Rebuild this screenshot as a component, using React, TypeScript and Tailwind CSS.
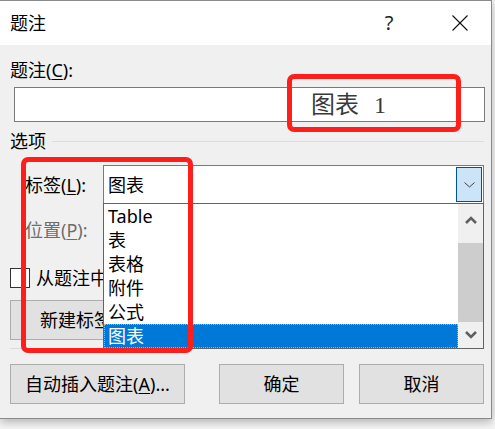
import React from "react";

const items = ["Table", "表", "表格", "附件", "公式", "图表"];

function ChevUp() {
  return (
    <svg width="12" height="8" viewBox="0 0 12 8">
      <polyline points="1,7 6,2 11,7" fill="none" stroke="#606060" strokeWidth="2.6" />
    </svg>
  );
}
function ChevDown() {
  return (
    <svg width="12" height="8" viewBox="0 0 12 8">
      <polyline points="1,1 6,6 11,1" fill="none" stroke="#606060" strokeWidth="2.6" />
    </svg>
  );
}

export default function App() {
  return (
    <div className="w-[495px] h-[429px] bg-[#f5f5f5] overflow-hidden font-['Noto_Sans','Noto_Sans_CJK_SC',sans-serif] text-[18px] text-black">
      <div className="w-[492px] h-[419px] flex flex-col border-t border-r border-b border-[#8a8a8a] shadow-[0_3px_9px_rgba(0,0,0,0.28)]">
        {/* title bar */}
        <div className="h-[44px] bg-white flex items-center pl-[10px]">
          <span className="leading-[24px] text-[18px]">题注</span>
          <span className="ml-auto w-[10px] text-center text-[20px] leading-[24px] text-[#222]">?</span>
          <svg className="ml-[58px] mr-[23px]" width="16" height="16" viewBox="0 0 16 16">
            <line x1="0.5" y1="0.5" x2="15.5" y2="15.5" stroke="#111" strokeWidth="1.1" />
            <line x1="15.5" y1="0.5" x2="0.5" y2="15.5" stroke="#111" strokeWidth="1.1" />
          </svg>
        </div>

        {/* body */}
        <div className="relative flex-1 bg-[#f0f0f0] flex flex-col">
          <div className="ml-[10px] mt-[13px] h-[24px] leading-[24px]">
            题注(<u className="underline-offset-2">C</u>):
          </div>
          <div className="ml-[14px] mt-[5px] w-[471px] h-[35px] border border-[#7a7a7a] bg-white flex items-center pl-[296px] font-['Liberation_Serif','Noto_Sans_CJK_SC',serif] text-[24px] text-[#3a3a3a] leading-none">
            <span>图表</span>
            <span className="ml-[15px]">1</span>
          </div>

          <div className="mt-[7px] h-[24px] flex items-center">
            <span className="ml-[10px] leading-[24px]">选项</span>
            <div className="ml-[6px] w-[432px] h-px bg-[#dcdcdc]" />
          </div>

          <div className="mt-[12px] h-[39px] flex items-center">
            <span className="ml-[25px] w-[78px] leading-[24px]">
              标签(<u className="underline-offset-2">L</u>):
            </span>
            <div className="w-[381px] h-[39px] border border-[#7a7a7a] bg-white flex p-[1px]">
              <div className="flex-1 flex items-center pl-[3px] leading-[24px]">图表</div>
              <div className="w-[26px] bg-[#cce4f7] border border-[#005499] flex items-center justify-center">
                <svg width="11" height="6" viewBox="0 0 11 6">
                  <polyline points="0.5,0.5 5.5,5 10.5,0.5" fill="none" stroke="#404040" strokeWidth="1" />
                </svg>
              </div>
            </div>
          </div>

          <div className="ml-[25px] mt-[14px] h-[24px] leading-[24px] text-[#6d6d6d]">
            位置(<u className="underline-offset-2">P</u>):
          </div>

          <div className="ml-[10px] mt-[26px] h-[20px] flex items-center">
            <div className="w-[20px] h-[20px] border border-[#333] bg-white" />
            <div className="ml-[6px] w-[67px] overflow-hidden leading-[24px] whitespace-nowrap">
              从题注中排除标签(<u className="underline-offset-2">E</u>)
            </div>
          </div>

          <div className="ml-[10px] mt-[12px] flex">
            <div className="w-[93px] h-[40px] border-l border-t border-b border-[#adadad] bg-[#e1e1e1] flex items-center pl-[29px] overflow-hidden whitespace-nowrap leading-[24px]">
              新建标签(<u className="underline-offset-2">N</u>)...
            </div>
          </div>

          <div className="ml-[10px] mt-[8px] w-[474px] h-px bg-[#dcdcdc]" />

          <div className="mt-[15px] flex">
            <div className="ml-[10px] w-[175px] h-[40px] border border-[#adadad] bg-[#e1e1e1] flex items-center justify-center leading-[24px] whitespace-nowrap">
              自动插入题注(<u className="underline-offset-2">A</u>)...
            </div>
            <div className="ml-[34px] w-[125px] h-[40px] border border-[#adadad] bg-[#e1e1e1] flex items-center justify-center leading-[24px]">
              确定
            </div>
            <div className="ml-[15px] w-[125px] h-[40px] border border-[#adadad] bg-[#e1e1e1] flex items-center justify-center leading-[24px]">
              取消
            </div>
          </div>

          {/* dropdown list overlay */}
          <div className="absolute left-[103px] top-[158px] w-[381px] h-[146px] border border-[#646464] bg-white flex">
            <div className="flex-1 flex flex-col">
              {items.map((t, i) =>
                i === items.length - 1 ? (
                  <div
                    key={t}
                    className="h-[24px] leading-[22px] pl-[3px] bg-[#0078d7] text-white border border-dotted border-[#e9a448]"
                  >
                    {t}
                  </div>
                ) : (
                  <div key={t} className="h-[24px] leading-[24px] pl-[4px]">
                    {t}
                  </div>
                )
              )}
            </div>
            <div className="w-[25px] bg-[#f0f0f0] flex flex-col">
              <div className="h-[30px] flex items-center justify-center pt-[1px]">
                <ChevUp />
              </div>
              <div className="h-[9px]" />
              <div className="h-[79px] bg-[#cdcdcd]" />
              <div className="flex-1 flex items-center justify-center">
                <ChevDown />
              </div>
            </div>
          </div>

          {/* red annotation boxes */}
          <div className="absolute left-[287px] top-[29px] w-[174px] h-[58px] border-[5px] border-[#ff1f1a] rounded-[7px]" />
          <div className="absolute left-[21px] top-[112px] w-[172px] h-[196px] border-[5px] border-[#ff1f1a] rounded-[7px]" />
        </div>
      </div>
    </div>
  );
}
